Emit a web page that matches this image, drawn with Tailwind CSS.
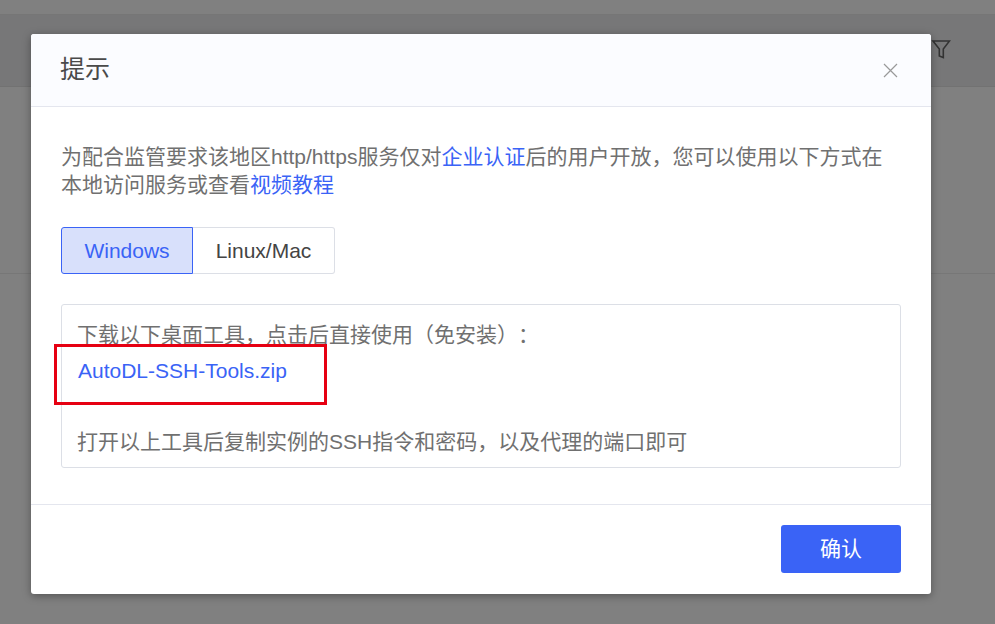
<!DOCTYPE html>
<html lang="zh-CN">
<head>
    <meta charset="UTF-8">
    <title>提示</title>
    <script src="https://cdn.jsdelivr.net/npm/@tailwindcss/browser@4"></script>
</head>
<body class="bg-[#808080] font-['Liberation_Sans','Noto_Sans_CJK_SC',sans-serif] [text-spacing-trim:space-all]">

<!-- page behind the mask -->
<div class="relative w-[995px] h-[624px] overflow-hidden">
    <div class="h-[15px] border-b border-[#767676]"></div>
    <div class="h-[72px] bg-[#777778] border-b border-[#727272] flex justify-end items-center pr-[44px] pb-[3px]">
        <svg class="w-[20px] h-[20px] text-[#333]" viewBox="0 0 20 20" fill="none" stroke="currentColor" stroke-width="1.6">
            <path d="M2 2h16.500l-6.200 8v8.500l-4-1.500v-7z"/>
        </svg>
    </div>
    <div class="h-[187px] border-b border-[#777]"></div>

    <!-- dialog -->
    <div class="absolute left-[31px] top-[34px] w-[900px] h-[560px] bg-white rounded-[3px] shadow-[0_2px_8px_rgba(0,0,0,0.35)] flex flex-col">
        <div class="h-[73px] shrink-0 bg-[#fbfcff] border-b border-[#e4e6ee] rounded-t-[3px] flex items-center justify-between pl-[29px] pr-[33px]">
            <span class="text-[25px] text-[#4a4a4a]">提示</span>
            <svg class="w-[15px] h-[15px] text-[#999]" viewBox="0 0 15 15" fill="none" stroke="currentColor" stroke-width="1.2">
                <path d="M1 1l13 13M14 1L1 14"/>
            </svg>
        </div>

        <div class="flex-1 px-[30px] pt-[36px]">
            <p class="text-[21px] leading-[28px] text-[#707070]">为配合监管要求该地区http/https服务仅对<a class="text-[#3a63f6]">企业认证</a>后的用户开放，您可以使用以下方式在本地访问服务或查看<a class="text-[#3a63f6]">视频教程</a></p>

            <div class="flex mt-[28px] h-[47px] text-[21px] leading-[44px]">
                <div class="w-[132px] flex items-center justify-center bg-[#d8e0fb] border border-[#3a63f6] rounded-l-[3px] text-[#3a63f6]">Windows</div>
                <div class="w-[142px] flex items-center justify-center border border-l-0 border-[#dcdfe6] rounded-r-[3px] text-[#444]">Linux/Mac</div>
            </div>

            <div class="mt-[30px] h-[164px] border border-[#dcdfe6] rounded-[3px] pl-[15px] pt-[16px] text-[21px] leading-[28px] text-[#707070]">
                <p>下载以下桌面工具，点击后直接使用（免安装）：</p>
                <p class="mt-[8px] pl-px text-[#3a63f6]">AutoDL-SSH-Tools.zip</p>
                <p class="mt-[43px]">打开以上工具后复制实例的SSH指令和密码，以及代理的端口即可</p>
            </div>
        </div>

        <div class="h-[90px] shrink-0 border-t border-[#e4e6ee] flex items-center justify-end pr-[30px] pb-[1px]">
            <button class="w-[120px] h-[48px] bg-[#3a63f6] rounded-[3px] text-white text-[21px]">确认</button>
        </div>
    </div>

    <!-- red annotation box -->
    <div class="absolute left-[54px] top-[344px] w-[273px] h-[61px] border-[3px] border-[#e60012]"></div>
</div>

</body>
</html>
